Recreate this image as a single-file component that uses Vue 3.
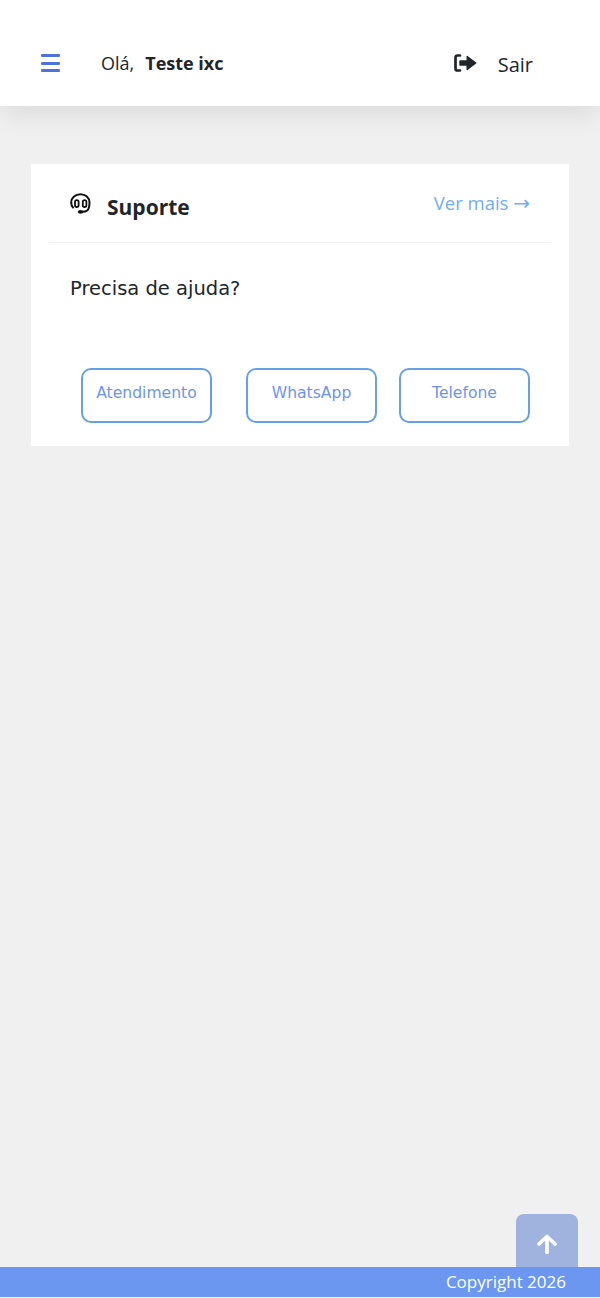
<script setup>
const actions = [
  { label: 'Atendimento', cls: 'first' },
  { label: 'WhatsApp', cls: 'second' },
  { label: 'Telefone', cls: 'third' },
]
</script>

<template>
  <div class="page">
    <header class="topbar">
      <button class="menu" aria-label="Menu">
        <span></span><span></span><span></span>
      </button>
      <div class="greeting">Olá,<strong>Teste ixc</strong></div>
      <a class="logout">
        <svg width="23" height="18" viewBox="0 0 23 18" aria-hidden="true">
          <path d="M6 1.500H3.500C2.300 1.500 1.500 2.300 1.500 3.500v11c0 1.200.8 2 2 2H6" fill="none" stroke="#212529" stroke-width="2.700" stroke-linecap="round"/>
          <path d="M6.200 6.200h6.300V2.500c0-.6.700-.9 1.100-.5l8.600 6.400c.4.300.4.900 0 1.200l-8.600 6.400c-.4.400-1.100.1-1.100-.5v-3.700H6.200c-.5 0-.9-.4-.9-.9V7.100c0-.5.400-.9.900-.9z" fill="#212529"/>
        </svg>
        <span class="logout-label">Sair</span>
      </a>
    </header>

    <main class="content">
      <section class="card">
        <div class="card-head">
          <div class="title">
            <svg class="headset" width="22" height="21" viewBox="0 0 22 21" aria-hidden="true">
              <path d="M3 14.500C1.700 13 1.200 11 1.200 9.500 1.200 4.800 5.500 1.200 10.500 1.200s9 3.600 9 8.300c0 3.800-.6 6.500-2.300 8-1.200 1-2.700 1.300-4.700 1.300" fill="none" stroke="#111" stroke-width="2" stroke-linecap="round"/>
              <rect x="5" y="7.200" width="3.600" height="6.800" rx="1.800" fill="none" stroke="#111" stroke-width="1.800"/>
              <rect x="12.800" y="7.200" width="3.600" height="6.800" rx="1.800" fill="none" stroke="#111" stroke-width="1.800"/>
              <ellipse cx="10.500" cy="18.800" rx="2.700" ry="1.900" fill="#111"/>
            </svg>
            <h2>Suporte</h2>
          </div>
          <a class="more">Ver mais <span class="arrow">→</span></a>
        </div>
        <p class="question">Precisa de ajuda?</p>
        <div class="actions">
          <button v-for="a in actions" :key="a.label" class="action" :class="a.cls">{{ a.label }}</button>
        </div>
      </section>
    </main>

    <footer class="footer">Copyright 2026</footer>
    <button class="to-top" aria-label="Voltar ao topo">
      <svg width="20" height="20" viewBox="0 0 20 20" aria-hidden="true">
        <path d="M10 18.500V2.500M2 10l8-7.500 8 7.500" fill="none" stroke="#fff" stroke-width="3.600" stroke-linecap="round" stroke-linejoin="round"/>
      </svg>
    </button>
  </div>
</template>

<style>
html, body { margin: 0; background: #fff; }
</style>

<style scoped>
.page {
  position: relative;
  box-sizing: border-box;
  height: 1298px;
  padding-bottom: 1px;
  display: flex;
  flex-direction: column;
  background: #f0f0f0;
  overflow: hidden;
  font-family: "Open Sans", "Noto Sans", sans-serif;
  color: #212529;
}
.topbar {
  box-sizing: border-box;
  height: 106px;
  flex: none;
  padding: 20px 67px 0 41px;
  display: flex;
  align-items: center;
  background: #fff;
  box-shadow: 0 8px 26px rgba(0, 0, 0, 0.09);
}
.menu {
  width: 19px;
  padding: 0;
  border: 0;
  background: none;
  display: flex;
  flex-direction: column;
  gap: 4.500px;
}
.menu span {
  display: block;
  height: 3px;
  border-radius: 1px;
  background: #4f72d6;
}
.greeting {
  margin-left: 41px;
  font-size: 18px;
  line-height: 24px;
  flex: 1;
}
.greeting strong {
  margin-left: 11px;
  font-weight: 700;
}
.logout {
  display: flex;
  align-items: center;
  gap: 21px;
  font-size: 20px;
}
.logout svg {
  margin-top: -1px;
}
.logout-label {
  margin-top: 2px;
}
.content {
  flex: 1;
  padding: 58px 31px 0;
}
.card {
  box-sizing: border-box;
  height: 282px;
  background: #fff;
  padding: 0 18px;
}
.card-head {
  box-sizing: border-box;
  height: 79px;
  padding: 0 21px;
  display: flex;
  justify-content: space-between;
  border-bottom: 1px solid #f1f1f1;
}
.title {
  display: flex;
  align-items: center;
  gap: 15px;
  padding-top: 6px;
  height: 73px;
}
.headset {
  margin-top: -7px;
}
.title h2 {
  margin: 0;
  font-size: 21px;
  font-weight: 700;
  line-height: 28px;
}
.more {
  margin-top: 25px;
  font-size: 18.500px;
  line-height: 27px;
  color: #71aef5;
}
.arrow {
  font-family: "DejaVu Sans", sans-serif;
  font-size: 20px;
  line-height: 20px;
}
.question {
  margin: 33px 0 0 21px;
  font-family: "DejaVu Sans", sans-serif;
  font-size: 19.500px;
  line-height: 26px;
}
.actions {
  margin-top: 66px;
  display: flex;
  justify-content: flex-start;
  padding: 0 22px 0 32px;
}
.action {
  box-sizing: border-box;
  flex: none;
  width: 131px;
  height: 55px;
  padding: 0 0 5px;
  display: block;
  background: #fff;
  border: 2px solid #65a0e8;
  border-radius: 10px;
  color: #6d94ea;
  font-family: "DejaVu Sans", sans-serif;
  font-size: 15.600px;
  line-height: 20px;
  text-align: center;
}
.action.second { margin-left: 34px; }
.action.third { margin-left: 22px; }
.footer {
  box-sizing: border-box;
  height: 30px;
  flex: none;
  padding-right: 34px;
  background: #6b97f0;
  color: #fff;
  font-size: 17px;
  line-height: 30px;
  text-align: right;
}
.to-top {
  position: absolute;
  right: 22px;
  bottom: 31px;
  width: 62px;
  height: 53px;
  padding: 7px 0 0;
  border: 0;
  border-radius: 8px 8px 0 0;
  background: #9fb3de;
  display: flex;
  align-items: center;
  justify-content: center;
}
</style>
